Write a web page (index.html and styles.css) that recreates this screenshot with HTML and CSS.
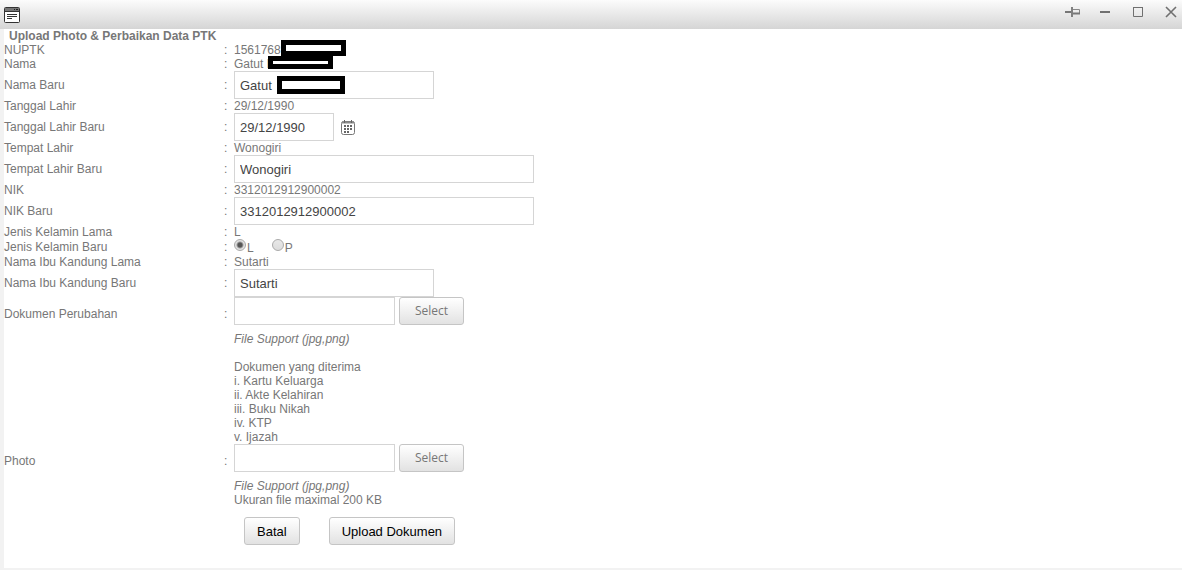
FILE: index.html
```html
<!DOCTYPE html>
<html lang="id">
<head>
<meta charset="utf-8">
<title>Upload Photo &amp; Perbaikan Data PTK</title>
<link rel="stylesheet" href="styles.css">
</head>
<body>
<div class="window">
  <header class="titlebar">
    <svg class="app-icon" width="16" height="16" viewBox="0 0 16 16" aria-hidden="true">
      <rect x=".5" y=".5" width="15" height="15" rx="1" fill="#fff" stroke="#333"/>
      <path d="M1 1h14v3H1z" fill="#777"/>
      <path d="M1 4.5h14" stroke="#333"/>
      <path d="M10 2.5h1M12 2.5h2" stroke="#222"/>
      <path d="M3 7.5h10M3 9.5h10M3 11.5h5" stroke="#333"/>
    </svg>
    <div class="commands">
      <button type="button" class="command" aria-label="Pin"><svg width="16" height="16" viewBox="0 0 16 16"><path d="M1 8h6" stroke="#777" stroke-width="2"/><path d="M8 3v10" stroke="#808080" stroke-width="2"/><path d="M9 5.5h6.5v4H9" fill="none" stroke="#888"/><path d="M9 9.5h7" stroke="#777" stroke-width="2"/></svg></button>
      <button type="button" class="command" aria-label="Minimize"><svg width="16" height="16" viewBox="0 0 16 16"><path d="M3 8h10" stroke="#707070" stroke-width="2"/></svg></button>
      <button type="button" class="command" aria-label="Maximize"><svg width="16" height="16" viewBox="0 0 16 16"><path d="M3.5 3.5h9v9h-9z" fill="none" stroke="#707070"/><path d="M3 3.5h10" stroke="#707070"/></svg></button>
      <button type="button" class="command" aria-label="Close"><svg width="16" height="16" viewBox="0 0 16 16"><path d="M3 3l10 10M13 3L3 13" stroke="#707070" stroke-width="1.6"/></svg></button>
    </div>
  </header>
  <form class="form">
    <h1 class="title">Upload Photo &amp; Perbaikan Data PTK</h1>
    <div class="row"><span>NUPTK</span><span>:</span><span class="value">1561768<i class="mask mask-nuptk"></i></span></div>
    <div class="row"><span>Nama</span><span>:</span><span class="value">Gatut D<i class="mask mask-nama"></i></span></div>
    <div class="row"><label for="nama">Nama Baru</label><span>:</span><span class="value"><input id="nama" class="text medium" type="text" value="Gatut"><i class="mask mask-input"></i></span></div>
    <div class="row"><span>Tanggal Lahir</span><span>:</span><span>29/12/1990</span></div>
    <div class="row"><label for="tanggal">Tanggal Lahir Baru</label><span>:</span><span class="value date"><input id="tanggal" class="text short" type="text" value="29/12/1990"><button type="button" class="calendar" aria-label="Pilih tanggal"><svg width="14" height="15" viewBox="0 0 14 15"><rect x=".5" y="1.5" width="13" height="13" rx="2" fill="#fff" stroke="#777"/><path d="M1 2.5h12" stroke="#888" stroke-width="2"/><path d="M3.5 0v3M10.5 0v3" stroke="#666"/><path d="M3 6h2M6 6h2M9 6h2M3 9h2M6 9h2M9 9h2M3 12h2M6 12h2" stroke="#666" stroke-width="2"/></svg></button></span></div>
    <div class="row"><span>Tempat Lahir</span><span>:</span><span>Wonogiri</span></div>
    <div class="row"><label for="tempat">Tempat Lahir Baru</label><span>:</span><input id="tempat" class="text long" type="text" value="Wonogiri"></div>
    <div class="row"><span>NIK</span><span>:</span><span>3312012912900002</span></div>
    <div class="row"><label for="nik">NIK Baru</label><span>:</span><input id="nik" class="text long" type="text" value="3312012912900002"></div>
    <div class="row"><span>Jenis Kelamin Lama</span><span>:</span><span>L</span></div>
    <div class="row" role="radiogroup" aria-labelledby="kelamin"><span id="kelamin">Jenis Kelamin Baru</span><span>:</span><span class="value radios"><label class="option"><input class="radio" type="radio" name="jk" checked><span>L</span></label><label class="option"><input class="radio" type="radio" name="jk"><span>P</span></label></span></div>
    <div class="row"><span>Nama Ibu Kandung Lama</span><span>:</span><span>Sutarti</span></div>
    <div class="row"><label for="ibu">Nama Ibu Kandung Baru</label><span>:</span><input id="ibu" class="text medium" type="text" value="Sutarti"></div>
    <div class="row upload"><label for="dokumen">Dokumen Perubahan</label><span>:</span><span class="value file"><input id="dokumen" class="text filename" type="text"><button type="button" class="button select">Select</button></span></div>
    <div class="notes">
      <em>File Support (jpg,png)</em>
      <p class="accepted">Dokumen yang diterima<br>i. Kartu Keluarga<br>ii. Akte Kelahiran<br>iii. Buku Nikah<br>iv. KTP<br>v. Ijazah</p>
    </div>
    <div class="row upload"><label for="photo">Photo</label><span>:</span><span class="value file"><input id="photo" class="text filename" type="text"><button type="button" class="button select">Select</button></span></div>
    <div class="notes"><em>File Support (jpg,png)</em><br>Ukuran file maximal 200 KB</div>
    <div class="actions"><button type="button" class="button">Batal</button><button type="button" class="button">Upload Dokumen</button></div>
  </form>
</div>
</body>
</html>
```
FILE: styles.css
```css
* { box-sizing: border-box; }
body {
  margin: 0;
  background: #fff;
  color: #777;
  font: 12px/14px "Liberation Sans", Arial, sans-serif;
}
.window {
  display: flex;
  flex-direction: column;
  min-height: 100vh;
}
.titlebar {
  display: flex;
  justify-content: space-between;
  align-items: center;
  height: 29px;
  padding: 0 3px 0 4px;
  background: linear-gradient(#fcfcfc, #d5d5d5);
}
.app-icon { display: block; }
.commands {
  display: flex;
  gap: 17px;
  padding-bottom: 5px;
}
.command, .calendar {
  display: block;
  padding: 0;
  border: 0;
  background: none;
}
.command svg, .calendar svg { display: block; }
.form {
  flex: 1;
  border-left: 4px solid #f2f2f2;
  border-bottom: 2px solid #f2f2f2;
}
.title {
  margin: 0;
  padding-left: 5px;
  font-size: 12px;
  line-height: 14px;
}
.row {
  display: grid;
  grid-template-columns: 220px 10px 1fr;
  align-items: center;
}
.value { position: relative; }
.text {
  display: block;
  height: 28px;
  margin: 0;
  padding: 0 5px;
  border: 1px solid #d5d5d5;
  background: #fff;
  color: #444;
  font: 13px "Liberation Sans", Arial, sans-serif;
}
.short { width: 100px; }
.medium { width: 200px; }
.long { width: 300px; }
.filename { width: 161px; }
.date {
  display: flex;
  align-items: center;
  gap: 7px;
}
.radios {
  display: flex;
  gap: 18px;
  height: 16px;
}
.option {
  display: flex;
  align-items: flex-start;
  gap: 1px;
}
.option span { padding-top: 2px; }
.radio {
  appearance: none;
  width: 12px;
  height: 12px;
  margin: 0;
  border: 1px solid #aaa;
  border-radius: 50%;
  background: linear-gradient(#e8e8e8, #dcdcdc);
}
.radio:checked { background: radial-gradient(circle, #555 0 2px, #e2e2e2 4px); }
.upload {
  grid-template-rows: 34px;
  height: 35px;
}
.file {
  display: flex;
  align-self: start;
  gap: 4px;
}
.button {
  height: 28px;
  padding: 0 12px;
  border: 1px solid #c5c5c5;
  border-radius: 3px;
  background: linear-gradient(#fff, #e2e2e2);
  color: #000;
  font: 13px "Liberation Sans", Arial, sans-serif;
}
.select {
  width: 65px;
  padding-bottom: 2px;
  color: #777;
  font: 12px "Open Sans", sans-serif;
}
.notes { padding-left: 230px; }
.accepted { margin: 14px 0 0; }
.actions {
  display: flex;
  gap: 29px;
  padding: 10px 0 10px 240px;
}
.mask {
  position: absolute;
  z-index: 1;
  border: 5px solid #000;
  background: #fff;
}
.mask-nuptk {
  left: 47px;
  top: -3px;
  width: 65px;
  height: 16px;
}
.mask-nama {
  left: 34px;
  top: -1px;
  width: 65px;
  height: 13px;
}
.mask-input {
  left: 43px;
  top: 5px;
  width: 68px;
  height: 18px;
}
```
